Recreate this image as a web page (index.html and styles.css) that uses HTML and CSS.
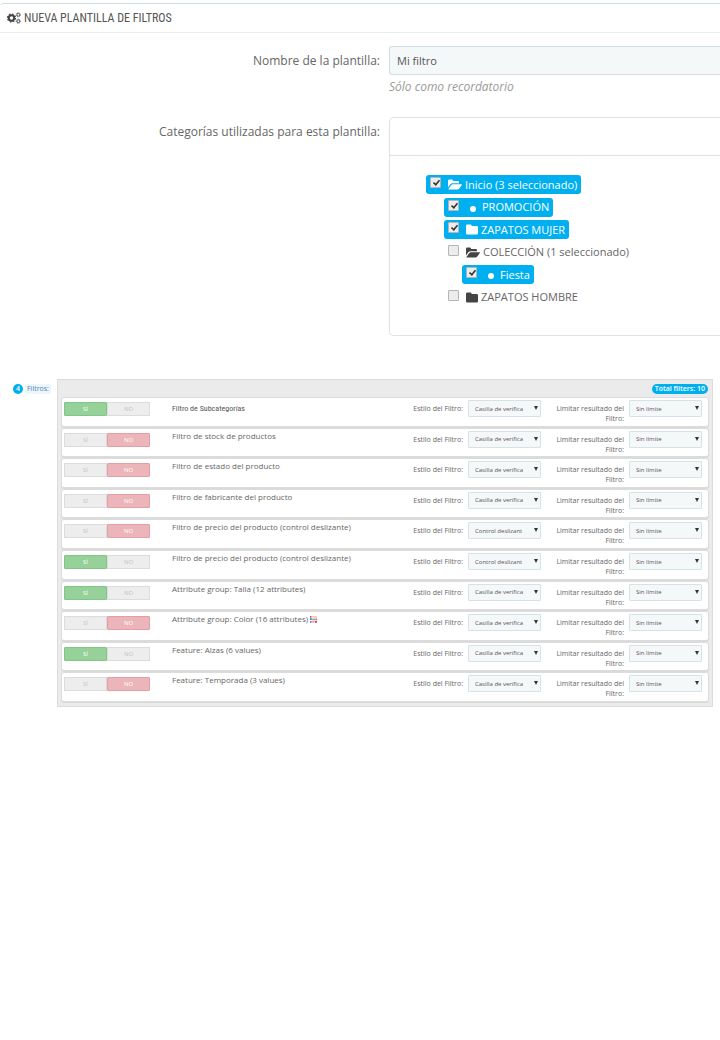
FILE: index.html
```html
<!DOCTYPE html>
<html lang="es">
<head>
<meta charset="utf-8">
<title>Nueva plantilla de filtros</title>
<link rel="stylesheet" href="styles.css">
</head>
<body>
<svg class="defs" aria-hidden="true">
  <symbol id="folder" viewBox="0 0 12 11"><path d="M0 1.8Q0 .5 1.3.5h3Q5.600.5 5.600 1.800V2h5Q12 2 12 3.300v5.900Q12 10.500 10.700 10.500H1.300Q0 10.500 0 9.200z"/></symbol>
  <symbol id="folder-open" viewBox="0 0 14 11"><path d="M0 8.600V1.800Q0 .5 1.300.5h2.400Q5 .5 5 1.800V2h4.700Q11 2 11 3.300V4.300H4.500Q3.200 4.300 2.300 5.300zM.5 10 3.100 6.300Q3.900 5.200 5 5.200h8.500q.8 0 .3.800l-2.500 3.400q-.8 1.100-1.900 1.100H.8q-.7 0-.3-.5z"/></symbol>
  <symbol id="arrow" viewBox="0 0 4 4"><path d="M0 0h4L2 4z"/></symbol>
</svg>
<main>
  <header class="heading">
    <svg class="cogs" viewBox="0 0 14 12" aria-hidden="true">
      <circle class="cog-teeth" cx="4.500" cy="6" r="3.900"/>
      <circle class="cog-ring" cx="4.500" cy="6" r="2.700"/>
      <circle class="small-teeth" cx="11.300" cy="2.800" r="2.100"/>
      <circle class="small-ring" cx="11.300" cy="2.800" r="1.400"/>
      <circle class="small-teeth" cx="11.300" cy="9.200" r="2.100"/>
      <circle class="small-ring" cx="11.300" cy="9.200" r="1.400"/>
    </svg>
    <h1>NUEVA PLANTILLA DE FILTROS</h1>
  </header>

  <form>
    <div class="field name-field">
      <label class="field-label" for="name">Nombre de la plantilla:</label>
      <div>
        <input class="text" id="name" type="text" value="Mi filtro">
        <p class="help">Sólo como recordatorio</p>
      </div>
    </div>

    <div class="field">
      <span class="field-label" id="cats">Categorías utilizadas para esta plantilla:</span>
      <div class="tree-panel">
        <div class="tree-head"></div>
        <ul class="tree" aria-labelledby="cats">
          <li><label class="node selected"><input type="checkbox" checked><svg class="open"><use href="#folder-open"/></svg>Inicio (3 seleccionado)</label></li>
          <li class="level-2"><label class="node selected"><input type="checkbox" checked><i class="dot"></i>PROMOCIÓN</label></li>
          <li class="level-2"><label class="node selected"><input type="checkbox" checked><svg class="closed"><use href="#folder"/></svg>ZAPATOS MUJER</label></li>
          <li class="level-2"><label class="node"><input type="checkbox"><svg class="open"><use href="#folder-open"/></svg>COLECCIÓN (1 seleccionado)</label></li>
          <li class="level-3"><label class="node selected"><input type="checkbox" checked><i class="dot"></i>Fiesta</label></li>
          <li class="level-2"><label class="node"><input type="checkbox"><svg class="closed"><use href="#folder"/></svg>ZAPATOS HOMBRE</label></li>
        </ul>
      </div>
    </div>

    <section class="filters">
      <div class="filters-label"><span class="count">4</span><span class="tag">Filtros:</span></div>
      <div class="filters-panel">
        <div class="filters-head"><span class="total">Total filters: 10</span></div>
        <ul class="rows">
          <li class="row">
            <span class="switch"><label class="yes"><input type="radio" name="s1" checked>SÍ</label><label class="no"><input type="radio" name="s1">NO</label></span>
            <span class="name narrow">Filtro de Subcategorías</span>
            <label class="opt" for="t1">Estilo del Filtro:</label>
            <span class="pick"><select id="t1"><option>Casilla de verifica</option></select><svg><use href="#arrow"/></svg></span>
            <label class="opt" for="l1">Limitar resultado del Filtro:</label>
            <span class="pick"><select id="l1"><option>Sin límite</option></select><svg><use href="#arrow"/></svg></span>
          </li>
          <li class="row">
            <span class="switch"><label class="yes"><input type="radio" name="s2">SÍ</label><label class="no"><input type="radio" name="s2" checked>NO</label></span>
            <span class="name">Filtro de stock de productos</span>
            <label class="opt" for="t2">Estilo del Filtro:</label>
            <span class="pick"><select id="t2"><option>Casilla de verifica</option></select><svg><use href="#arrow"/></svg></span>
            <label class="opt" for="l2">Limitar resultado del Filtro:</label>
            <span class="pick"><select id="l2"><option>Sin límite</option></select><svg><use href="#arrow"/></svg></span>
          </li>
          <li class="row">
            <span class="switch"><label class="yes"><input type="radio" name="s3">SÍ</label><label class="no"><input type="radio" name="s3" checked>NO</label></span>
            <span class="name">Filtro de estado del producto</span>
            <label class="opt" for="t3">Estilo del Filtro:</label>
            <span class="pick"><select id="t3"><option>Casilla de verifica</option></select><svg><use href="#arrow"/></svg></span>
            <label class="opt" for="l3">Limitar resultado del Filtro:</label>
            <span class="pick"><select id="l3"><option>Sin límite</option></select><svg><use href="#arrow"/></svg></span>
          </li>
          <li class="row">
            <span class="switch"><label class="yes"><input type="radio" name="s4">SÍ</label><label class="no"><input type="radio" name="s4" checked>NO</label></span>
            <span class="name">Filtro de fabricante del producto</span>
            <label class="opt" for="t4">Estilo del Filtro:</label>
            <span class="pick"><select id="t4"><option>Casilla de verifica</option></select><svg><use href="#arrow"/></svg></span>
            <label class="opt" for="l4">Limitar resultado del Filtro:</label>
            <span class="pick"><select id="l4"><option>Sin límite</option></select><svg><use href="#arrow"/></svg></span>
          </li>
          <li class="row">
            <span class="switch"><label class="yes"><input type="radio" name="s5">SÍ</label><label class="no"><input type="radio" name="s5" checked>NO</label></span>
            <span class="name">Filtro de precio del producto (control deslizante)</span>
            <label class="opt" for="t5">Estilo del Filtro:</label>
            <span class="pick"><select id="t5"><option>Control deslizant</option></select><svg><use href="#arrow"/></svg></span>
            <label class="opt" for="l5">Limitar resultado del Filtro:</label>
            <span class="pick"><select id="l5"><option>Sin límite</option></select><svg><use href="#arrow"/></svg></span>
          </li>
          <li class="row">
            <span class="switch"><label class="yes"><input type="radio" name="s6" checked>SÍ</label><label class="no"><input type="radio" name="s6">NO</label></span>
            <span class="name">Filtro de precio del producto (control deslizante)</span>
            <label class="opt" for="t6">Estilo del Filtro:</label>
            <span class="pick"><select id="t6"><option>Control deslizant</option></select><svg><use href="#arrow"/></svg></span>
            <label class="opt" for="l6">Limitar resultado del Filtro:</label>
            <span class="pick"><select id="l6"><option>Sin límite</option></select><svg><use href="#arrow"/></svg></span>
          </li>
          <li class="row">
            <span class="switch"><label class="yes"><input type="radio" name="s7" checked>SÍ</label><label class="no"><input type="radio" name="s7">NO</label></span>
            <span class="name">Attribute group: Talla (12 attributes)</span>
            <label class="opt" for="t7">Estilo del Filtro:</label>
            <span class="pick"><select id="t7"><option>Casilla de verifica</option></select><svg><use href="#arrow"/></svg></span>
            <label class="opt" for="l7">Limitar resultado del Filtro:</label>
            <span class="pick"><select id="l7"><option>Sin límite</option></select><svg><use href="#arrow"/></svg></span>
          </li>
          <li class="row">
            <span class="switch"><label class="yes"><input type="radio" name="s8">SÍ</label><label class="no"><input type="radio" name="s8" checked>NO</label></span>
            <span class="name">Attribute group: Color (16 attributes)
              <svg class="swatch" viewBox="0 0 7 7" aria-hidden="true"><path fill="#e8483c" d="M0 0h1.500v1.800H0z"/><path fill="#f0b48c" d="M2.200.3H7v1.300H2.200z"/><path fill="#3f86cf" d="M0 2.300h1.800V4H0z"/><path fill="#6cc08a" d="M2.200 2.600H5.500V4.300H2.200z"/><path fill="#e8645a" d="M5.500 2.600H7V4.300H5.500z"/><path fill="#8b5fc0" d="M0 5h1.600v1.800H0z"/><path fill="#f08aa8" d="M2.200 5H4.500V6.600H2.200z"/><path fill="#e23c6e" d="M5 5h2v1.800H5z"/></svg></span>
            <label class="opt" for="t8">Estilo del Filtro:</label>
            <span class="pick"><select id="t8"><option>Casilla de verifica</option></select><svg><use href="#arrow"/></svg></span>
            <label class="opt" for="l8">Limitar resultado del Filtro:</label>
            <span class="pick"><select id="l8"><option>Sin límite</option></select><svg><use href="#arrow"/></svg></span>
          </li>
          <li class="row">
            <span class="switch"><label class="yes"><input type="radio" name="s9" checked>SÍ</label><label class="no"><input type="radio" name="s9">NO</label></span>
            <span class="name">Feature: Alzas (6 values)</span>
            <label class="opt" for="t9">Estilo del Filtro:</label>
            <span class="pick"><select id="t9"><option>Casilla de verifica</option></select><svg><use href="#arrow"/></svg></span>
            <label class="opt" for="l9">Limitar resultado del Filtro:</label>
            <span class="pick"><select id="l9"><option>Sin límite</option></select><svg><use href="#arrow"/></svg></span>
          </li>
          <li class="row">
            <span class="switch"><label class="yes"><input type="radio" name="s10">SÍ</label><label class="no"><input type="radio" name="s10" checked>NO</label></span>
            <span class="name">Feature: Temporada (3 values)</span>
            <label class="opt" for="t10">Estilo del Filtro:</label>
            <span class="pick"><select id="t10"><option>Casilla de verifica</option></select><svg><use href="#arrow"/></svg></span>
            <label class="opt" for="l10">Limitar resultado del Filtro:</label>
            <span class="pick"><select id="l10"><option>Sin límite</option></select><svg><use href="#arrow"/></svg></span>
          </li>
        </ul>
      </div>
    </section>
  </form>
</main>
</body>
</html>
```

FILE: styles.css
```css
* { box-sizing: border-box; }
body {
  margin: 0;
  background: #fff;
  color: #666;
  font-family: "Open Sans", "Noto Sans", sans-serif;
  font-size: 12px;
  line-height: 16px;
}
.defs { display: none; }
ul, p, h1 { margin: 0; padding: 0; list-style: none; }
main { padding-top: 3px; }

.heading {
  display: flex;
  align-items: center;
  gap: 3px;
  height: 30px;
  padding-left: 7px;
  border-top: 1px solid #d0dde0;
  border-bottom: 1px solid #e8eeee;
  border-top-left-radius: 4px;
}
.heading h1 {
  color: #555;
  font-family: "Ubuntu Condensed", "Roboto Condensed", "Liberation Sans Narrow", "Open Sans Condensed", sans-serif;
  font-size: 12px;
  font-weight: 400;
  line-height: 16px;
}
.cogs { width: 14px; height: 12px; fill: none; }
.cog-ring { stroke: #444; stroke-width: 2; }
.cog-teeth { stroke: #444; stroke-width: 1.4; stroke-dasharray: 1.6 1.46; }
.small-ring { stroke: #555; stroke-width: 1; }
.small-teeth { stroke: #555; stroke-width: .9; stroke-dasharray: .9 .75; }

.field {
  display: grid;
  grid-template-columns: 380px 1fr;
  gap: 9px;
}
.field-label { padding-top: 7px; text-align: right; }
.name-field { padding: 13px 0 22px; }
.text {
  display: block;
  width: 100%;
  height: 29px;
  padding: 0 7px;
  border: 1px solid #cfdee2;
  border-right: 0;
  border-radius: 3px 0 0 3px;
  background: #f5f8f9;
  color: #555;
  font: 11px/16px "Open Sans", "Noto Sans", sans-serif;
}
.help { padding-top: 4px; color: #999; font-style: italic; }

.tree-panel {
  border: 1px solid #dfe1e3;
  border-right: 0;
  border-radius: 5px 0 0 5px;
}
.tree-head { height: 38px; border-bottom: 1px solid #dfe1e3; }
.tree {
  display: flex;
  flex-direction: column;
  justify-content: space-between;
  min-height: 179px;
  padding: 19px 36px 28px;
}
.tree li { display: flex; }
.level-2 { padding-left: 18px; }
.level-3 { padding-left: 36px; }
.node {
  display: flex;
  align-items: center;
  height: 19px;
  padding: 0 4px;
  border-radius: 3px;
  font-size: 11px;
  white-space: nowrap;
}
.selected { background: #00aff0; color: #fff; }
.node input {
  appearance: none;
  width: 11px;
  height: 11px;
  margin: 0 7px 4px 0;
  border: 1px solid #b5b5b5;
  border-radius: 1px;
  background: #ececec;
}
.node input:checked::after {
  content: "";
  display: block;
  width: 3px;
  height: 6px;
  margin: 0 0 0 3px;
  border: solid #333;
  border-width: 0 2px 2px 0;
  box-sizing: content-box;
  transform: rotate(40deg) scale(.8);
}
.node svg { height: 11px; fill: #444; }
.selected svg { fill: #fff; }
.open { width: 14px; margin-right: 3px; }
.closed { width: 12px; margin-right: 3px; }
.dot { width: 6px; height: 6px; margin: 3px 6px 0 4px; border-radius: 50%; background: #fff; }

.filters {
  display: grid;
  grid-template-columns: 44px 1fr;
  padding: 43px 7px 0 13px;
  font-size: 8px;
  line-height: 10px;
}
.filters-label { display: flex; align-items: flex-start; gap: 2px; padding-top: 5px; }
.count {
  width: 10px;
  height: 10px;
  border-radius: 50%;
  background: #00aff0;
  color: #fff;
  font-size: 7px;
  font-weight: 600;
  text-align: center;
}
.tag { padding: 0 2px; border-radius: 2px; background: #edf6fb; color: #4f86b5; font-size: 7px; }
.filters-panel { padding: 0 4px 5px; border: 1px solid #dcdcdc; background: #ebebeb; }
.filters-head { display: flex; justify-content: flex-end; padding: 4px 0; }
.total { padding: 0 3px; border-radius: 5px; background: #00aff0; color: #fff; font-size: 7px; font-weight: 600; }
.rows {
  display: grid;
  grid-auto-rows: 1fr;
  gap: 3px;
  min-height: 303px;
}
.row {
  display: grid;
  grid-template-columns: 86px 221px 1fr 73px 78px 73px;
  align-items: start;
  column-gap: 5px;
  padding: 2px 6px 0 2px;
  border-radius: 2px;
  background: #fff;
  box-shadow: 0 0 0 1px #dcdcdc, 0 1px 0 1px #dadada;
}
.switch {
  display: grid;
  grid-template-columns: 1fr 1fr;
  height: 14px;
  margin-top: 2px;
  border-radius: 1px;
  font-size: 6px;
  line-height: 12px;
  text-align: center;
}
.switch label { border: 1px solid #dcdcdc; background: #ededed; color: #c4c4c4; }
.switch input { position: absolute; opacity: 0; margin: 0; width: 1px; height: 1px; }
.switch label:has(:checked) { border-radius: 1px; }
.switch .yes:has(:checked) { border-color: #82c587; background: #95d199; color: #fff; }
.switch .no:has(:checked) { border-color: #e2a0a5; background: #ebb5b9; color: #fff; }
.name { padding-left: 17px; white-space: nowrap; }
.narrow {
  padding-top: 4px;
  color: #555;
  font-family: "Ubuntu Condensed", "Roboto Condensed", "Liberation Sans Narrow", "Open Sans Condensed", sans-serif;
}
.swatch { width: 7px; height: 7px; vertical-align: -1px; }
.opt { padding-top: 4px; font-size: 7px; text-align: right; }
.pick { position: relative; display: block; }
.pick select {
  appearance: none;
  display: block;
  width: 100%;
  height: 17px;
  padding: 0 6px;
  border: 1px solid #d5e2e6;
  border-radius: 1px;
  background: #f5f8f9;
  color: #555;
  font: 6px/10px "Open Sans", "Noto Sans", sans-serif;
}
.pick svg { position: absolute; top: 6px; right: 3px; width: 4px; height: 4px; fill: #333; }
```
